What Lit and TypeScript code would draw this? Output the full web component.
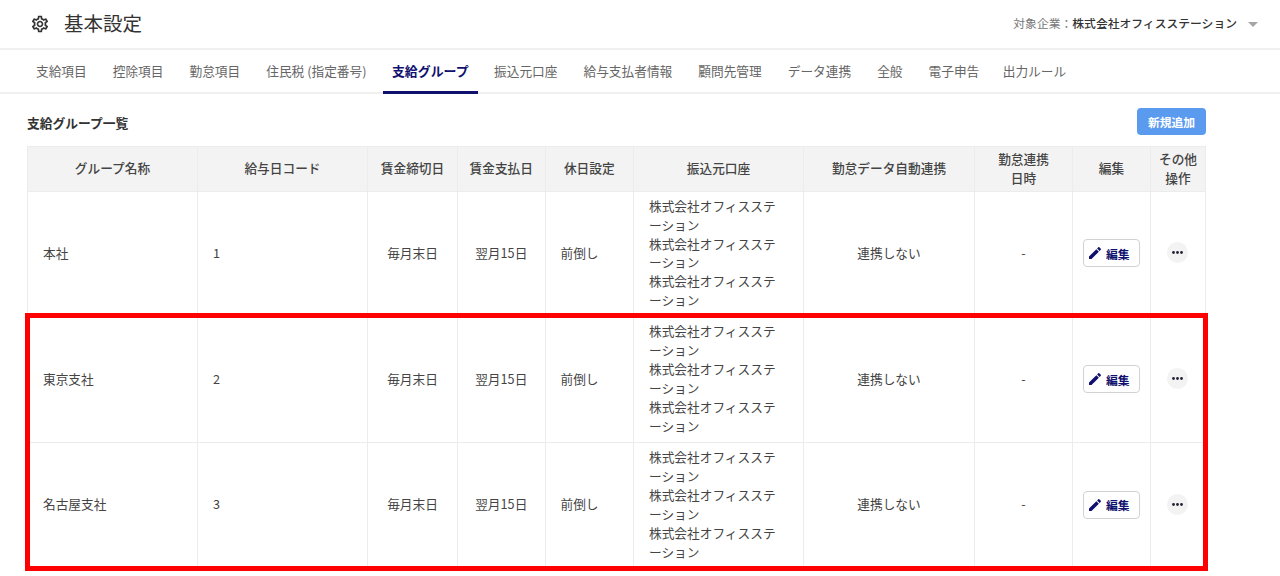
import { LitElement, html, css, svg } from "lit";
import { customElement } from "lit/decorators.js";

const GEAR = "M19.43 12.98c.04-.32.07-.64.07-.98 0-.34-.03-.66-.07-.98l2.11-1.65c.19-.15.24-.42.12-.64l-2-3.46c-.09-.16-.26-.25-.44-.25-.06 0-.12.01-.17.03l-2.49 1c-.52-.4-1.08-.73-1.69-.98l-.38-2.65C14.46 2.18 14.25 2 14 2h-4c-.25 0-.46.18-.49.42l-.38 2.65c-.61.25-1.17.59-1.69.98l-2.49-1c-.06-.02-.12-.03-.18-.03-.17 0-.34.09-.43.25l-2 3.46c-.13.22-.07.49.12.64l2.11 1.65c-.04.32-.07.65-.07.98 0 .33.03.66.07.98l-2.11 1.65c-.19.15-.24.42-.12.64l2 3.46c.09.16.26.25.44.25.06 0 .12-.01.17-.03l2.49-1c.52.4 1.08.73 1.69.98l.38 2.65c.03.24.24.42.49.42h4c.25 0 .46-.18.49-.42l.38-2.65c.61-.25 1.17-.59 1.69-.98l2.49 1c.06.02.12.03.18.03.17 0 .34-.09.43-.25l2-3.46c.12-.22.07-.49-.12-.64l-2.11-1.65zm-1.98-1.71c.04.31.05.52.05.73 0 .21-.02.43-.05.73l-.14 1.13.89.7 1.08.84-.7 1.21-1.27-.51-1.04-.42-.9.68c-.43.32-.84.56-1.25.73l-1.06.43-.16 1.13-.2 1.35h-1.4l-.19-1.35-.16-1.13-1.06-.43c-.43-.18-.83-.41-1.23-.71l-.91-.7-1.06.43-1.27.51-.7-1.21 1.08-.84.89-.7-.14-1.13c-.03-.31-.05-.54-.05-.74s.02-.43.05-.73l.14-1.13-.89-.7-1.08-.84.7-1.21 1.27.51 1.04.42.9-.68c.43-.32.84-.56 1.25-.73l1.06-.43.16-1.13.2-1.35h1.39l.19 1.35.16 1.13 1.06.43c.43.18.83.41 1.23.71l.91.7 1.06-.43 1.27-.51.7 1.21-1.07.85-.89.7.14 1.13zM12 8c-2.21 0-4 1.79-4 4s1.79 4 4 4 4-1.79 4-4-1.79-4-4-4zm0 6c-1.1 0-2-.9-2-2s.9-2 2-2 2 .9 2 2-.9 2-2 2z";
const PEN = "M3 17.25V21h3.75L17.81 9.94l-3.75-3.75L3 17.25zM20.71 7.04c.39-.39.39-1.02 0-1.41l-2.34-2.34c-.39-.39-1.02-.39-1.41 0l-1.83 1.83 3.75 3.75 1.83-1.83z";

const TABS = ["支給項目", "控除項目", "勤怠項目", "住民税 (指定番号)", "支給グループ", "振込元口座", "給与支払者情報", "顧問先管理", "データ連携", "全般", "電子申告", "出力ルール"];
const COLS = [170, 170, 90, 87.5, 88.5, 170, 171, 98, 78, 55];
const ROWS = [["本社", "1"], ["東京支社", "2"], ["名古屋支社", "3"]];

@customElement("app-root")
export class AppRoot extends LitElement {
  static styles = css`
    :host {
      display: block;
      position: relative;
      height: 576px;
      overflow: hidden;
      background: #fff;
      color: #444;
      font-family: "Noto Sans CJK JP", "Noto Sans", sans-serif;
      font-size: 12.7px;
    }
    .top {
      height: 48px;
      display: flex;
      align-items: center;
      padding: 0 22px 0 30px;
      border-bottom: 2px solid #f0f0f0;
    }
    .gear { width: 20px; height: 20px; fill: #333; margin-right: 14px; margin-top: -1px; }
    .title { font-size: 19.5px; color: #333; line-height: 1; flex: 1; padding-bottom: 2px; }
    .company { font-size: 11.8px; color: #777; padding-bottom: 3px; }
    .company b { color: #333; font-weight: 500; }
    .caret {
      width: 0; height: 0; margin-left: 11px;
      border-left: 5px solid transparent;
      border-right: 5px solid transparent;
      border-top: 5px solid #a5a5a5;
    }
    .tabs {
      height: 42px;
      padding: 0 0 0 26.5px;
      display: flex;
      gap: 7px;
      border-bottom: 2px solid #f0f0f0;
    }
    .tab {
      padding: 0 9.5px;
      line-height: 42px;
      color: #666;
      white-space: nowrap;
    }
    .tab:last-child { margin-left: -2.5px; }
    .tab.on {
      color: #10106e; font-weight: 700; font-size: 12.9px;
      padding: 0 9px; height: 41px; border-bottom: 3px solid #10106e;
    }
    .main { padding: 14px 0 0 27px; width: 1179px; }
    .head { display: flex; justify-content: space-between; align-items: center; height: 27px; margin-bottom: 11px; }
    .head h2 { margin: 0; padding-top: 2px; font-size: 12.75px; font-weight: 700; color: #333; }
    .add {
      width: 69px; height: 27px; border: 0; border-radius: 4px; padding: 0;
      background: #5a9aef; color: #fff; font: 700 11.8px "Noto Sans CJK JP", sans-serif;
    }
    table { border-collapse: collapse; table-layout: fixed; width: 1178px; }
    th, td { border: 1px solid #ececec; text-align: center; vertical-align: middle; }
    th {
      background: #f3f3f3; height: 45px; padding: 0 0 1px; box-sizing: border-box; font-weight: 500;
      line-height: 18.5px; color: #444; font-size: 12.7px;
    }
    td { padding: 4.6px 0 6.4px; line-height: 18.95px; color: #444; }
    td.l { text-align: left; padding-left: 15px; }
    .edit {
      display: inline-flex; align-items: center; justify-content: flex-start; gap: 3px;
      width: 57px; height: 28px; box-sizing: border-box; padding: 0 0 0 3px;
      border: 1px solid #d2d2d2; border-radius: 4px; background: #fff;
      color: #10106e; font: 700 11.8px "Noto Sans CJK JP", sans-serif;
      vertical-align: middle;
    }
    .edit svg { width: 16px; height: 16px; fill: #10106e; }
    .more {
      display: inline-flex; align-items: center; justify-content: center;
      width: 21px; height: 21px; border-radius: 50%; background: #f3f3f3;
      vertical-align: middle; margin: -2px 1px 0 0;
    }
    .more svg { width: 11px; height: 3px; fill: #223; }
    .mark {
      position: absolute; left: 25px; top: 313px; width: 1183px; height: 258px;
      box-sizing: border-box; border: 5.5px solid #ff0000; pointer-events: none;
    }
  `;

  render() {
    return html`
      <div class="top">
        <svg class="gear" viewBox="0 0 24 24">${svg`<path d=${GEAR}></path>`}</svg>
        <div class="title">基本設定</div>
        <div class="company">対象企業：<b>株式会社オフィスステーション</b></div>
        <div class="caret"></div>
      </div>
      <div class="tabs">
        ${TABS.map((t) => html`<div class="tab ${t === "支給グループ" ? "on" : ""}">${t}</div>`)}
      </div>
      <div class="main">
        <div class="head"><h2>支給グループ一覧</h2><button class="add">新規追加</button></div>
        <table>
          <colgroup>${COLS.map((w) => html`<col style="width:${w}px" />`)}</colgroup>
          <thead>
            <tr>
              <th>グループ名称</th><th>給与日コード</th><th>賃金締切日</th><th>賃金支払日</th><th>休日設定</th>
              <th>振込元口座</th><th>勤怠データ自動連携</th><th>勤怠連携<br />日時</th><th>編集</th><th>その他<br />操作</th>
            </tr>
          </thead>
          <tbody>
            ${ROWS.map(([name, code]) => html`
              <tr>
                <td class="l">${name}</td>
                <td class="l">${code}</td>
                <td>毎月末日</td>
                <td>翌月15日</td>
                <td class="l">前倒し</td>
                <td class="l">株式会社オフィスステ<br />ーション<br />株式会社オフィスステ<br />ーション<br />株式会社オフィスステ<br />ーション</td>
                <td>連携しない</td>
                <td>-</td>
                <td><button class="edit"><svg viewBox="0 0 24 24">${svg`<path d=${PEN}></path>`}</svg>編集</button></td>
                <td><span class="more"><svg viewBox="0 0 11 3">${svg`<circle cx="1.5" cy="1.5" r="1.4"></circle><circle cx="5.5" cy="1.5" r="1.4"></circle><circle cx="9.5" cy="1.5" r="1.4"></circle>`}</svg></span></td>
              </tr>`)}
          </tbody>
        </table>
      </div>
      <div class="mark"></div>
    `;
  }
}
